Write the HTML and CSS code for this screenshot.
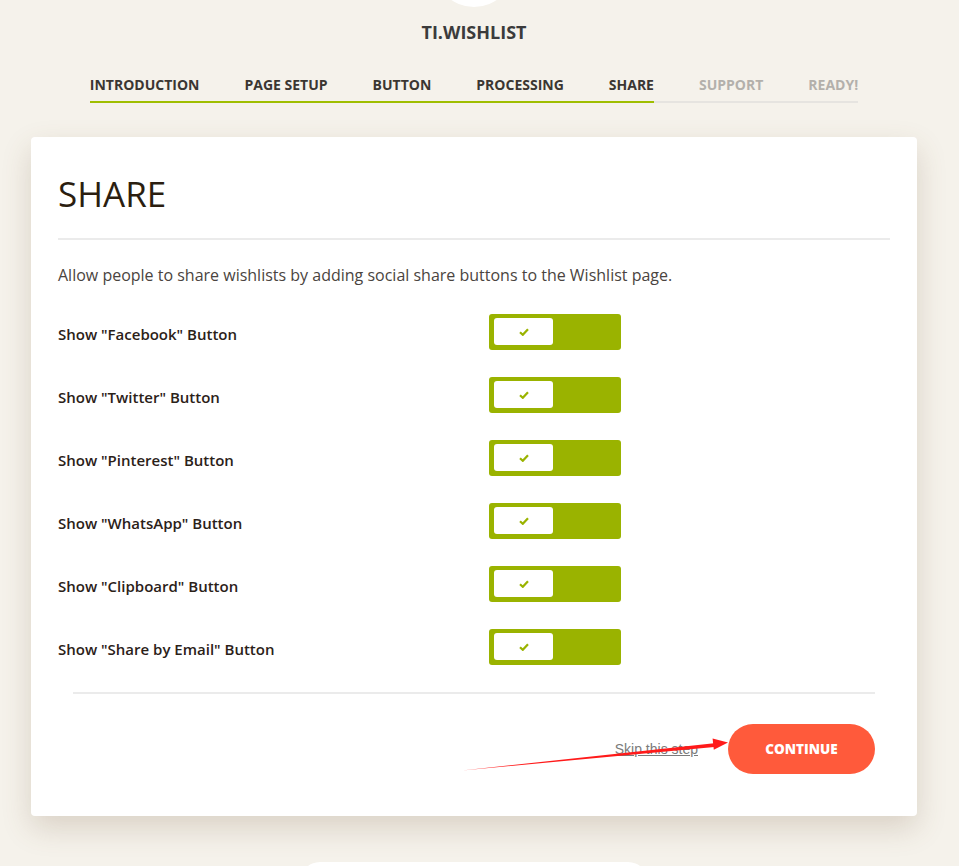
FILE: index.html
```html
<!DOCTYPE html>
<html lang="en">
<head>
    <meta charset="UTF-8">
    <meta name="viewport" content="width=device-width, initial-scale=1.0">
    <title>TI.Wishlist - Setup Wizard</title>
    <link rel="stylesheet" href="styles.css">
</head>
<body>
    <div class="wizard">
        <div class="logo"></div>
        <div class="brand">TI.WISHLIST</div>

        <ul class="steps">
            <li class="step done">Introduction</li>
            <li class="step done">Page Setup</li>
            <li class="step done">Button</li>
            <li class="step done">Processing</li>
            <li class="step done">Share</li>
            <li class="step">Support</li>
            <li class="step">Ready!</li>
        </ul>

        <div class="card">
            <h1>Share</h1>
            <hr class="rule">
            <p class="intro">Allow people to share wishlists by adding social share buttons to the Wishlist page.</p>

            <div class="options">
                <div class="option">
                    <span class="label">Show "Facebook" Button</span>
                    <span class="toggle"><span class="knob"><svg width="10" height="8" viewBox="0 0 10 8"><path d="M1 4.2 L3.8 6.8 L9 1.2" fill="none" stroke="#9ab300" stroke-width="2.2"/></svg></span></span>
                </div>
                <div class="option">
                    <span class="label">Show "Twitter" Button</span>
                    <span class="toggle"><span class="knob"><svg width="10" height="8" viewBox="0 0 10 8"><path d="M1 4.2 L3.8 6.8 L9 1.2" fill="none" stroke="#9ab300" stroke-width="2.2"/></svg></span></span>
                </div>
                <div class="option">
                    <span class="label">Show "Pinterest" Button</span>
                    <span class="toggle"><span class="knob"><svg width="10" height="8" viewBox="0 0 10 8"><path d="M1 4.2 L3.8 6.8 L9 1.2" fill="none" stroke="#9ab300" stroke-width="2.2"/></svg></span></span>
                </div>
                <div class="option">
                    <span class="label">Show "WhatsApp" Button</span>
                    <span class="toggle"><span class="knob"><svg width="10" height="8" viewBox="0 0 10 8"><path d="M1 4.2 L3.8 6.8 L9 1.2" fill="none" stroke="#9ab300" stroke-width="2.2"/></svg></span></span>
                </div>
                <div class="option">
                    <span class="label">Show "Clipboard" Button</span>
                    <span class="toggle"><span class="knob"><svg width="10" height="8" viewBox="0 0 10 8"><path d="M1 4.2 L3.8 6.8 L9 1.2" fill="none" stroke="#9ab300" stroke-width="2.2"/></svg></span></span>
                </div>
                <div class="option">
                    <span class="label">Show "Share by Email" Button</span>
                    <span class="toggle"><span class="knob"><svg width="10" height="8" viewBox="0 0 10 8"><path d="M1 4.2 L3.8 6.8 L9 1.2" fill="none" stroke="#9ab300" stroke-width="2.2"/></svg></span></span>
                </div>
            </div>

            <hr class="rule footer-rule">

            <div class="actions">
                <a class="skip" href="#">Skip this step</a>
                <button class="continue">Continue</button>
            </div>
        </div>

        <div class="next-card"></div>
    </div>

    <!-- red pointer arrow drawn on top -->
    <svg class="pointer" width="959" height="866" viewBox="0 0 959 866">
        <polygon points="462,770.5 714,743.2 714.4,747" fill="#ff1a1a"/>
        <polygon points="728,742.6 712.6,738.4 713.8,749.8" fill="#ff1a1a"/>
    </svg>
</body>
</html>
```

FILE: styles.css
```css
body {
    margin: 0;
    background: #f5f2eb;
    font-family: "Open Sans", Arial, sans-serif;
    color: #3a3a3a;
    position: relative;
    overflow: hidden;
    height: 866px;
}
.wizard {
    width: 948px;
    display: flex;
    flex-direction: column;
    align-items: center;
}
.logo {
    width: 80px;
    height: 80px;
    margin-top: -73px;
    border-radius: 50%;
    background: #fff;
}
.brand {
    margin-top: 13px;
    font-size: 18px;
    line-height: 24px;
    font-weight: 700;
    color: #3b3b3b;
}
.steps {
    display: flex;
    list-style: none;
    margin: 31px 0 0;
    padding: 0;
}
.step {
    padding: 0 0 6px 45px;
    font-size: 14px;
    line-height: 20px;
    font-weight: 700;
    text-transform: uppercase;
    color: #b3b0ab;
    border-bottom: 2px solid #e6e4e0;
}
.step:first-child {
    padding-left: 0;
}
.step.done {
    color: #3b3632;
    border-bottom-color: #9fbe00;
}
.card {
    align-self: stretch;
    margin: 34px 31px 0;
    padding: 35px 27px 42px;
    background: #fff;
    border-radius: 4px;
    box-shadow: 0 12px 30px rgba(110, 80, 50, 0.2);
}
h1 {
    margin: 0;
    font-size: 35px;
    line-height: 44px;
    font-weight: 400;
    text-transform: uppercase;
    color: #2b1e10;
}
.rule {
    height: 2px;
    margin: 22px 0 0;
    border: none;
    background: #ebebeb;
}
.intro {
    margin: 24px 0 0;
    font-size: 16px;
    line-height: 22px;
    color: #4a4440;
}
.options {
    display: flex;
    flex-direction: column;
    gap: 27px;
    margin-top: 28px;
}
.option {
    display: flex;
    align-items: center;
}
.label {
    width: 431px;
    padding-top: 4px;
    font-size: 15px;
    font-weight: 600;
    color: #2b2118;
}
.toggle {
    width: 132px;
    height: 36px;
    box-sizing: border-box;
    padding: 4px 5px;
    background: #9ab300;
    border-radius: 3px;
}
.knob {
    width: 59px;
    height: 27px;
    display: flex;
    align-items: center;
    justify-content: center;
    background: #fff;
    border-radius: 3px;
}
.footer-rule {
    margin: 27px 15px 0;
}
.actions {
    display: flex;
    justify-content: flex-end;
    align-items: center;
    gap: 30px;
    margin-top: 30px;
    padding-right: 15px;
}
.skip {
    font-family: "Liberation Sans", Arial, sans-serif;
    font-size: 14px;
    color: #7b7b7b;
}
.continue {
    width: 147px;
    height: 50px;
    border: none;
    border-radius: 25px;
    background: #ff5a3b;
    color: #fff;
    font-family: "Open Sans", Arial, sans-serif;
    font-size: 13.5px;
    font-weight: 800;
    text-transform: uppercase;
    cursor: pointer;
}
.next-card {
    width: 348px;
    height: 40px;
    margin-top: 46px;
    background: #fff;
    border-radius: 24px;
}
.pointer {
    position: absolute;
    top: 0;
    left: 0;
    pointer-events: none;
}
```
